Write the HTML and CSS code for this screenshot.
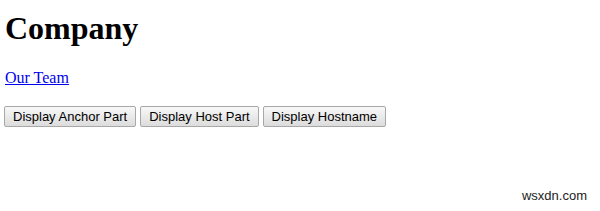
FILE: index.html
```html
<!DOCTYPE html>
<html lang="en">
<head>
    <meta charset="UTF-8">
    <title>Company</title>
    <link rel="stylesheet" href="styles.css">
</head>
<body>
    <h1>Company</h1>
    <p><a href="#team" id="teamLink">Our Team</a></p>
    <div class="actions">
        <button type="button">Display Anchor Part</button>
        <button type="button">Display Host Part</button>
        <button type="button">Display Hostname</button>
    </div>
    <div class="watermark">wsxdn.com</div>
</body>
</html>
```

FILE: styles.css
```css
body {
    font-family: "Liberation Serif", "Times New Roman", serif;
    margin: 0;
    padding: 0 5px;
    color: #000;
    background: #fff;
}
h1 {
    font-size: 32px;
    margin: 6px 0 0;
    line-height: 44px;
}
p {
    margin: 19px 0 0;
    font-size: 16px;
    line-height: 18px;
}
a {
    color: #0000ee;
}
.actions {
    margin-top: 19px;
    display: flex;
    gap: 4px;
    margin-left: -1px;
}
button {
    font-family: "Liberation Sans", Arial, sans-serif;
    font-size: 13px;
    height: 21px;
    padding: 0 8px;
    border: 1px solid #a8a8a8;
    border-radius: 2px;
    background: linear-gradient(#f8f8f8, #dcdcdc);
    color: #000;
}
.watermark {
    position: absolute;
    right: 13px;
    bottom: 8px;
    font-family: "Liberation Sans", Arial, sans-serif;
    font-size: 13px;
    color: #222;
}
```
